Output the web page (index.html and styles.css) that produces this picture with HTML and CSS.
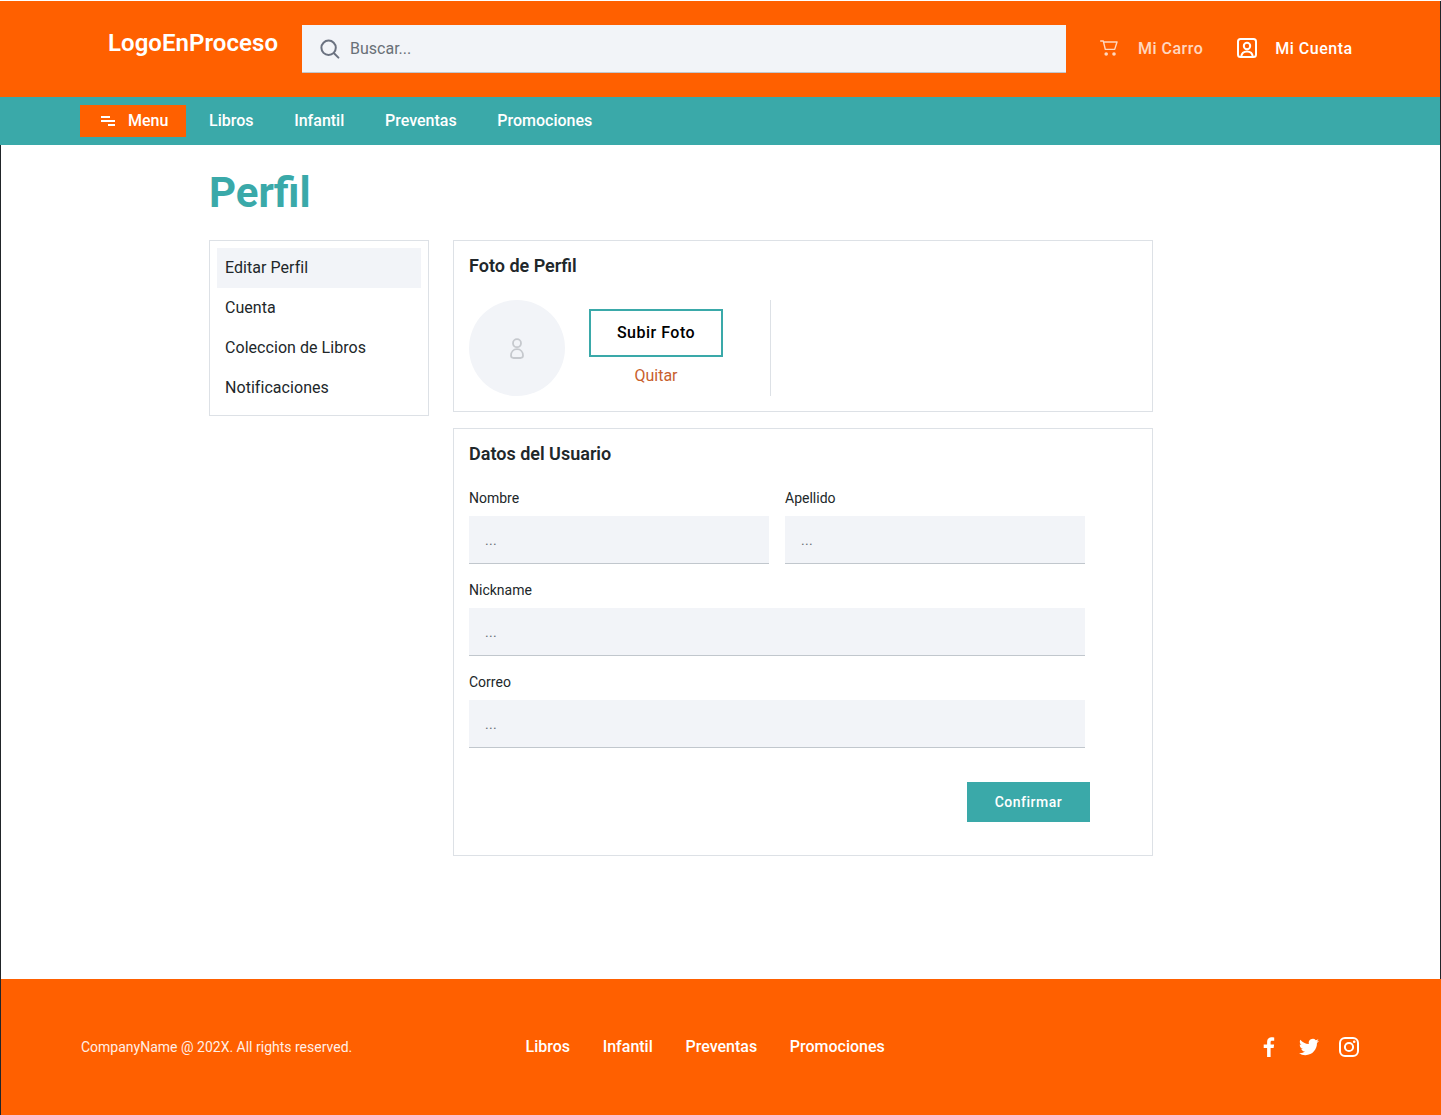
FILE: index.html
```html
<!DOCTYPE html>
<html lang="es">
<head>
<meta charset="utf-8">
<title>Perfil</title>
<link rel="stylesheet" href="styles.css">
</head>
<body>
<div class="page">
  <header class="topbar">
    <div class="logo">LogoEnProceso</div>
    <div class="search">
      <svg class="search-icon" width="20" height="20" viewBox="0 0 20 20" fill="none" stroke="#6b7280" stroke-width="2" stroke-linecap="round"><circle cx="8.600" cy="8.800" r="7.200"/><path d="M14 14.200 18.400 18.600"/></svg>
      <span>Buscar...</span>
    </div>
    <div class="account-link muted">
      <svg width="18" height="16" viewBox="0 0 18 16" fill="none" stroke="#fff" stroke-width="1.400" stroke-linecap="round" stroke-linejoin="round"><path d="M.7 1h2.600l2 8.400h9.400L17 2H3.600"/><circle cx="6.200" cy="14" r="1.800" fill="#fff" stroke="none"/><circle cx="14" cy="14" r="1.800" fill="#fff" stroke="none"/></svg>
      <span>Mi Carro</span>
    </div>
    <div class="account-link">
      <svg width="20" height="20" viewBox="0 0 20 20" fill="none" stroke="#fff" stroke-width="2" stroke-linejoin="round"><rect x="1" y="1" width="18" height="18" rx="2.500"/><circle cx="10" cy="8" r="3.200"/><path d="M4.200 18.600c.4-3.400 2.400-5.200 5.800-5.200s5.400 1.800 5.800 5.200"/></svg>
      <span>Mi Cuenta</span>
    </div>
  </header>
  <nav class="navbar">
    <div class="menu-btn">
      <svg width="14" height="10" viewBox="0 0 14 10" fill="#fff"><rect x="0" y="0" width="9" height="2"/><rect x="0" y="4" width="14" height="2"/><rect x="7" y="8" width="7" height="2"/></svg>
      <span>Menu</span>
    </div>
    <a class="nav-link">Libros</a>
    <a class="nav-link">Infantil</a>
    <a class="nav-link">Preventas</a>
    <a class="nav-link">Promociones</a>
  </nav>
  <main class="content">
    <h1 class="title">Perfil</h1>
    <div class="columns">
      <aside class="side">
        <div class="side-item active">Editar Perfil</div>
        <div class="side-item">Cuenta</div>
        <div class="side-item">Coleccion de Libros</div>
        <div class="side-item">Notificaciones</div>
      </aside>
      <div class="panels">
        <section class="card card-photo">
          <h2 class="card-title">Foto de Perfil</h2>
          <div class="photo-row">
            <div class="avatar">
              <svg width="14" height="21" viewBox="0 0 14 21" fill="none" stroke="#c6c9ce" stroke-width="1.800"><circle cx="7" cy="5.200" r="4"/><path d="M3.600 20c-1.600 0-2.600-1-2.600-2.400 0-3.600 2.400-6.400 6-6.400s6 2.800 6 6.400c0 1.400-1 2.400-2.600 2.400z"/></svg>
            </div>
            <div class="photo-actions">
              <div class="upload">Subir Foto</div>
              <div class="remove">Quitar</div>
            </div>
            <div class="photo-divider"></div>
          </div>
        </section>
        <section class="card card-form">
          <h2 class="card-title">Datos del Usuario</h2>
          <div class="form-grid">
            <div class="field"><label class="field-label">Nombre</label><div class="input">...</div></div>
            <div class="field"><label class="field-label">Apellido</label><div class="input">...</div></div>
            <div class="field wide"><label class="field-label">Nickname</label><div class="input">...</div></div>
            <div class="field wide"><label class="field-label">Correo</label><div class="input">...</div></div>
          </div>
          <div class="form-actions"><div class="confirm">Confirmar</div></div>
        </section>
      </div>
    </div>
  </main>
  <footer class="footer">
    <div class="copyright">CompanyName @ 202X. All rights reserved.</div>
    <div class="foot-links">
      <a class="foot-link">Libros</a>
      <a class="foot-link">Infantil</a>
      <a class="foot-link">Preventas</a>
      <a class="foot-link">Promociones</a>
    </div>
    <div class="social">
      <svg width="20" height="20" viewBox="0 0 20 20" fill="#fff"><path d="M11.600 20v-9h3l.5-3.600h-3.500V5.300c0-1 .3-1.600 1.700-1.600h1.900V.4C14.800.3 13.800.2 12.700.2 10 .2 8.100 1.800 8.100 4.800v2.600H4.700V11h3.400v9z"/></svg>
      <svg width="20" height="20" viewBox="0 0 24 24" fill="#fff"><path d="M23.950 4.570a10 10 0 0 1-2.820.770 4.960 4.960 0 0 0 2.160-2.720c-.950.550-2 .950-3.130 1.190a4.920 4.920 0 0 0-8.380 4.480C7.690 8.090 4.070 6.130 1.640 3.160a4.820 4.820 0 0 0-.670 2.480c0 1.710.870 3.210 2.190 4.100a4.900 4.900 0 0 1-2.230-.620v.060a4.920 4.920 0 0 0 3.950 4.830 5 5 0 0 1-2.210.080 4.940 4.940 0 0 0 4.600 3.420A9.870 9.870 0 0 1 0 19.540a14 14 0 0 0 7.560 2.210c9.050 0 14-7.500 14-13.980 0-.210 0-.420-.020-.630a9.940 9.940 0 0 0 2.460-2.550z"/></svg>
      <svg width="20" height="20" viewBox="0 0 20 20" fill="none" stroke="#fff" stroke-width="2"><rect x="1" y="1" width="18" height="18" rx="5"/><circle cx="10" cy="10" r="4.100"/><circle cx="15.200" cy="4.800" r="1.300" fill="#fff" stroke="none"/></svg>
    </div>
  </footer>
</div>
</body>
</html>
```
FILE: styles.css
```css
* { box-sizing: border-box; }
html, body { margin: 0; padding: 0; background: #fff; }
body { font-family: Roboto, "Liberation Sans", sans-serif; color: #212529; }
.page { width: 1441px; height: 1115px; display: flex; flex-direction: column; padding-top: 1px; }
.topbar { height: 96px; flex: none; background: #ff6000; display: flex; align-items: flex-start; padding: 24px 0 0 108px; color: #fff; border-right: 1px solid #212529; }
.logo { width: 194px; font-size: 24px; line-height: 36px; font-weight: 600; letter-spacing: .05px; }
.search { width: 764px; height: 48px; background: #f2f4f8; border-bottom: 1px solid #c1c7cd; display: flex; align-items: center; gap: 10px; padding-left: 18px; font-size: 16px; color: #697077; }
.search-icon { flex: none; }
.account-link { display: flex; align-items: center; gap: 20px; height: 46px; font-size: 16px; font-weight: 500; letter-spacing: .5px; margin-left: 34px; }
.account-link + .account-link { gap: 18px; }
.account-link.muted { opacity: .75; }
.navbar { height: 48px; flex: none; background: #3aa9a9; display: flex; align-items: center; padding-left: 80px; gap: 40.700px; color: #fff; font-size: 16px; font-weight: 500; border-right: 1px solid #212529; }
.menu-btn { width: 106px; height: 32px; background: #ff6000; display: flex; align-items: center; gap: 13px; padding-left: 21px; padding-bottom: 1px; margin-right: -17.700px; }
.nav-link { color: #fff; margin-bottom: 2px; }
.content { flex: 1; padding: 0 0 0 208px; border-left: 1px solid #212529; border-right: 1px solid #212529; }
.title { margin: 22px 0 0; font-size: 42px; line-height: 52px; font-weight: 700; color: #3aa9a9; }
.columns { display: flex; align-items: flex-start; gap: 24px; margin-top: 21px; }
.side { width: 220px; border: 1px solid #dde1e6; padding: 7px; }
.side-item { height: 40px; display: flex; align-items: center; padding-left: 8px; font-size: 16px; line-height: 20px; color: #21272a; letter-spacing: .05px; }
.side-item.active { background: #f2f4f8; }
.panels { width: 700px; display: flex; flex-direction: column; gap: 16px; }
.card { border: 1px solid #dde1e6; padding: 15px; }
.card-photo { height: 172px; }
.card-form { height: 428px; }
.card-title { margin: 0; font-size: 18px; line-height: 20px; font-weight: 600; color: #21272a; }
.photo-row { display: flex; margin-top: 24px; }
.avatar { width: 96px; height: 96px; border-radius: 50%; background: #f2f4f8; display: flex; align-items: center; justify-content: center; }
.photo-actions { width: 134px; margin-left: 24px; padding-top: 9px; display: flex; flex-direction: column; align-items: center; }
.upload { width: 134px; height: 48px; border: 2px solid #3aa9a9; padding-bottom: 2px; display: flex; align-items: center; justify-content: center; font-size: 16px; font-weight: 500; letter-spacing: .5px; color: #000; }
.remove { margin-top: 9px; font-size: 16px; line-height: 20px; color: #c8602d; }
.photo-divider { width: 1px; height: 96px; background: #dde1e6; margin-left: 47px; }
.form-grid { display: grid; grid-template-columns: 300px 300px; column-gap: 16px; row-gap: 16px; margin-top: 24px; }
.field.wide { grid-column: 1 / span 2; }
.field-label { display: block; font-size: 14px; line-height: 20px; color: #21272a; margin-bottom: 8px; }
.input { height: 48px; background: #f2f4f8; border-bottom: 1px solid #c1c7cd; padding: 0 16px; font-size: 14px; line-height: 48px; letter-spacing: .3px; color: #697077; }
.form-actions { display: flex; justify-content: flex-end; margin-top: 34px; padding-right: 47px; }
.confirm { width: 123px; height: 40px; background: #3aa9a9; color: #fff; font-size: 14px; font-weight: 500; letter-spacing: .5px; display: flex; align-items: center; justify-content: center; }
.footer { height: 136px; flex: none; background: #ff6000; display: flex; align-items: center; color: #fff; padding-left: 80px; border-left: 1px solid #212529; }
.copyright { width: 444.500px; font-size: 14px; line-height: 20px; opacity: .9; }
.foot-links { display: flex; gap: 32.700px; font-size: 16px; font-weight: 500; margin-bottom: 2px; }
.foot-link { color: #fff; }
.social { margin-left: auto; display: flex; gap: 20px; padding-right: 82px; }
```
